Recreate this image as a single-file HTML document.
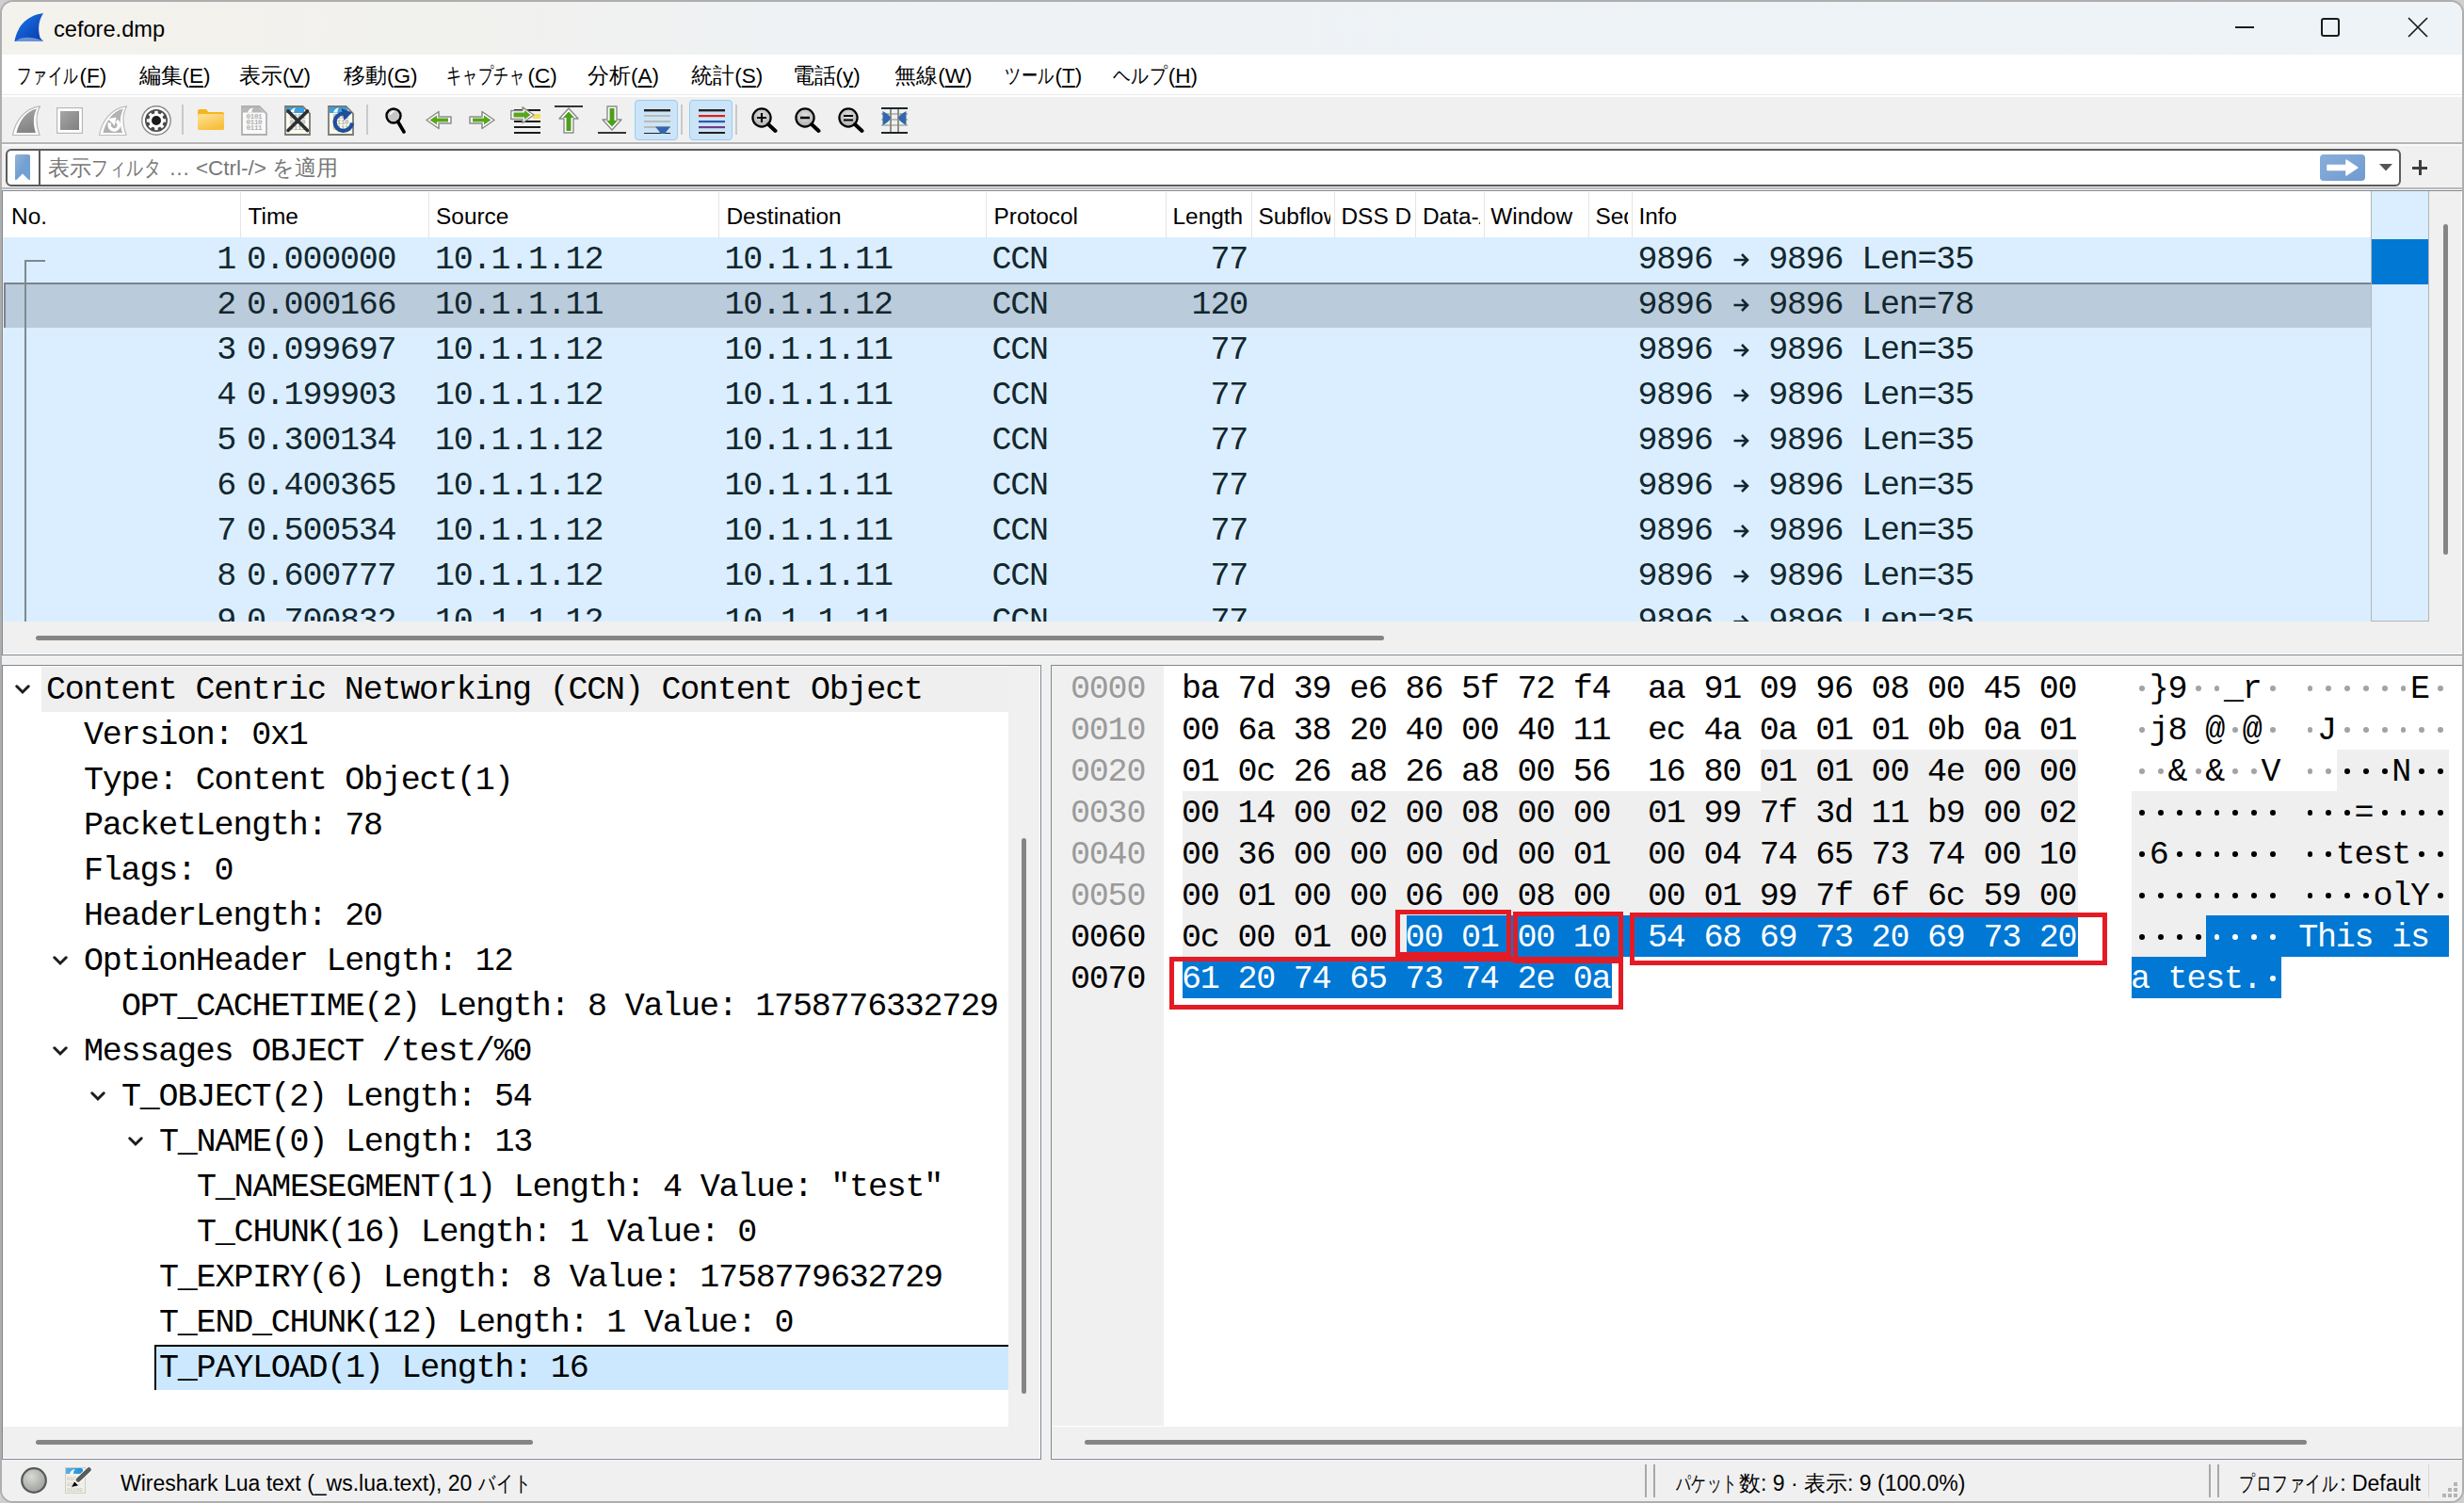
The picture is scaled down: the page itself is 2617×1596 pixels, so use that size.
<!DOCTYPE html><html><head><meta charset="utf-8"><title>cefore.dmp</title><style>
*{box-sizing:border-box;margin:0;padding:0}
html,body{width:2617px;height:1596px;overflow:hidden;background:#cfcfcf;font-family:"Liberation Sans", sans-serif}
.ab{position:absolute}
.win{position:absolute;left:0;top:0;width:2617px;height:1596px;border:2px solid #aeaeae;border-radius:14px;overflow:hidden;background:#f0f0f0}
.ui{font-family:"Liberation Sans", sans-serif;font-size:23.7px;color:#000;white-space:nowrap;line-height:30px;font-feature-settings:"palt" 1}
.mono{font-family:"Liberation Mono", monospace;font-size:35px;letter-spacing:-1.2px;white-space:pre;line-height:48px}
.u{text-decoration:underline;text-underline-offset:3px;text-decoration-thickness:1.5px}
</style></head><body>
<div class="win">
<div class="ab" style="left:-2px;top:-2px;width:2617px;height:1596px">
<div class="ab" style="left:0;top:0;width:2617px;height:58px;background:linear-gradient(90deg,#f4f2ec 0px,#f1f1ee 500px,#eef2f5 900px,#eef3f7 2617px)"></div>
<svg class="ab" style="left:14px;top:13px" width="34" height="33" viewBox="0 0 34 33">
<defs><linearGradient id="sg" x1="0" y1="0" x2="1" y2="1"><stop offset="0" stop-color="#1a7cf0"/><stop offset="1" stop-color="#0a36a8"/></linearGradient></defs>
<path d="M1.5 31 C4 18 11 4 32 1 C27 9 26 17 28.5 27 L32 31 Z" fill="url(#sg)"/>
<path d="M2 31 C8 26 18 25 31 30 L32 31 Z" fill="#7fa6e0" opacity="0.8"/>
</svg>
<div class="ab ui" style="left:57px;top:16px;font-size:23.6px">cefore.dmp</div>
<div class="ab" style="left:2374px;top:28px;width:20px;height:2px;background:#1a1a1a"></div>
<div class="ab" style="left:2465px;top:19px;width:20px;height:20px;border:2px solid #1a1a1a;border-radius:3px"></div>
<svg class="ab" style="left:2557px;top:18px" width="22" height="22" viewBox="0 0 22 22"><path d="M1 1 L21 21 M21 1 L1 21" stroke="#1a1a1a" stroke-width="1.7"/></svg>
<div class="ab" style="left:0;top:58px;width:2617px;height:43px;background:#fff"></div>
<div class="ab" style="left:0;top:100px;width:2617px;height:1px;background:#ebebeb"></div>
<div class="ab" style="left:0;top:101px;width:2617px;height:2px;background:#fff"></div>
<div class="ab ui" style="left:17.5px;top:66px;font-size:22.5px"><span style="display:inline-block;transform:scaleX(0.6778);transform-origin:0 0;margin-right:-29.00px">ファイル</span>(<span class="u">F</span>)</div>
<div class="ab ui" style="left:147.5px;top:66px;font-size:22.5px">編集(<span class="u">E</span>)</div>
<div class="ab ui" style="left:253.9px;top:66px;font-size:22.5px">表示(<span class="u">V</span>)</div>
<div class="ab ui" style="left:365px;top:66px;font-size:22.5px">移動(<span class="u">G</span>)</div>
<div class="ab ui" style="left:474.2px;top:66px;font-size:22.5px"><span style="display:inline-block;transform:scaleX(0.7013);transform-origin:0 0;margin-right:-33.60px">キャプチャ</span>(<span class="u">C</span>)</div>
<div class="ab ui" style="left:624px;top:66px;font-size:22.5px">分析(<span class="u">A</span>)</div>
<div class="ab ui" style="left:734.3px;top:66px;font-size:22.5px">統計(<span class="u">S</span>)</div>
<div class="ab ui" style="left:841.6px;top:66px;font-size:22.5px">電話(<span class="u">y</span>)</div>
<div class="ab ui" style="left:950.2px;top:66px;font-size:22.5px">無線(<span class="u">W</span>)</div>
<div class="ab ui" style="left:1066.8px;top:66px;font-size:22.5px"><span style="display:inline-block;transform:scaleX(0.7453);transform-origin:0 0;margin-right:-17.19px">ツール</span>(<span class="u">T</span>)</div>
<div class="ab ui" style="left:1181.6px;top:66px;font-size:22.5px"><span style="display:inline-block;transform:scaleX(0.8107);transform-origin:0 0;margin-right:-12.78px">ヘルプ</span>(<span class="u">H</span>)</div>
<div class="ab" style="left:0;top:103px;width:2617px;height:48px;background:#f0f0f0"></div>
<div class="ab" style="left:0;top:151px;width:2617px;height:2px;background:#b5b5b5"></div>
<div class="ab" style="left:0;top:153px;width:2617px;height:2px;background:#f9f9f9"></div>
<svg class="ab" style="left:13px;top:112px" width="30" height="32" viewBox="0 0 30 32"><defs><linearGradient id="g1" x1="0" y1="0" x2="0.3" y2="1"><stop offset="0" stop-color="#a8a8a8"/><stop offset="1" stop-color="#858585"/></linearGradient></defs>
<path d="M0.5 31.5 C3 18 12 3 29.5 0.8 C25 9 25 20 29 31.5 Z" fill="#fff" stroke="#b8b8b8" stroke-width="1.2"/>
<path d="M4.5 29 C7 18 14 6 26 3.5 C22 11 22 20 25 29 Z" fill="url(#g1)"/></svg>
<svg class="ab" style="left:60px;top:114px" width="28" height="28" viewBox="0 0 28 28"><defs><linearGradient id="g2" x1="0" y1="0" x2="1" y2="1"><stop offset="0" stop-color="#a5a5a5"/><stop offset="1" stop-color="#808080"/></linearGradient></defs>
<rect x="0.6" y="0.6" width="26.8" height="26.8" fill="#fff" stroke="#b8b8b8" stroke-width="1.2"/><rect x="4" y="4" width="20" height="20" fill="url(#g2)"/></svg>
<svg class="ab" style="left:105px;top:112px" width="30" height="32" viewBox="0 0 30 32"><path d="M0.5 31.5 C3 18 12 3 29.5 0.8 C25 9 25 20 29 31.5 Z" fill="#fff" stroke="#bdbdbd" stroke-width="1.2"/>
<path d="M4.5 29 C7 18 14 6 26 3.5 C22 11 22 20 25 29 Z" fill="#b2b2b2"/>
<path d="M18.8 16.4 A5.1 5.1 0 1 1 11.6 18.6" fill="none" stroke="#fff" stroke-width="3.6"/><path d="M9.6 14.2 L18.4 12.4 L16.9 21.5 Z" fill="#fff"/></svg>
<svg class="ab" style="left:150px;top:112px" width="32" height="32" viewBox="0 0 32 32"><circle cx="16" cy="16" r="15.2" fill="#fff" stroke="#8a8a8a" stroke-width="1.4"/><circle cx="16" cy="16" r="12" fill="#4a4a4a"/>
<g fill="#fff"><circle cx="16" cy="16" r="7.8"/><rect x="14.3" y="5.8" width="3.4" height="4" transform="rotate(0 16 16)"/><rect x="14.3" y="5.8" width="3.4" height="4" transform="rotate(45 16 16)"/><rect x="14.3" y="5.8" width="3.4" height="4" transform="rotate(90 16 16)"/><rect x="14.3" y="5.8" width="3.4" height="4" transform="rotate(135 16 16)"/><rect x="14.3" y="5.8" width="3.4" height="4" transform="rotate(180 16 16)"/><rect x="14.3" y="5.8" width="3.4" height="4" transform="rotate(225 16 16)"/><rect x="14.3" y="5.8" width="3.4" height="4" transform="rotate(270 16 16)"/><rect x="14.3" y="5.8" width="3.4" height="4" transform="rotate(315 16 16)"/></g><circle cx="16" cy="16" r="5" fill="#1a1a1a"/></svg>
<div class="ab" style="left:193px;top:111px;width:2px;height:32px;background:#c9c9c9"></div>
<div class="ab" style="left:389px;top:111px;width:2px;height:32px;background:#c9c9c9"></div>
<div class="ab" style="left:723px;top:111px;width:2px;height:32px;background:#c9c9c9"></div>
<div class="ab" style="left:781px;top:111px;width:2px;height:32px;background:#c9c9c9"></div>
<svg class="ab" style="left:210px;top:116px" width="28" height="22" viewBox="0 0 28 22"><defs><linearGradient id="g6" x1="0" y1="0" x2="0.5" y2="1"><stop offset="0" stop-color="#fde49a"/><stop offset="1" stop-color="#f8bf3c"/></linearGradient></defs>
<path d="M0 2 Q0 0 2 0 H9 L11.5 3 H26 Q28 3 28 5 V20 Q28 22 26 22 H2 Q0 22 0 20 Z" fill="#f6b51e"/><path d="M0 7 Q0 5 2 5 H26 Q28 5 28 7 V20 Q28 22 26 22 H2 Q0 22 0 20 Z" fill="url(#g6)"/></svg>
<svg class="ab" style="left:256px;top:112px" width="28" height="32" viewBox="0 0 28 32"><path d="M1 1 H19.5 L27 8.5 V31 H1 Z" fill="#fafafa" stroke="#b0b0b0" stroke-width="1.8"/>
<g fill="#b0b0b0" font-family='"Liberation Mono", monospace' font-size="7.5" font-weight="bold" letter-spacing="-0.3"><text x="5.5" y="13.8">0101</text><text x="5.5" y="20">0110</text><text x="5.5" y="26.2">0111</text></g><path d="M2 2 H19 L26 9 V7.5 H2Z" fill="#b8b8b8"/><path d="M7 7.5 Q8.5 3 13 2.5 Q11 4.5 11.5 7.5 Z" fill="#fff"/></svg>
<svg class="ab" style="left:302px;top:112px" width="28" height="32" viewBox="0 0 28 32"><path d="M1 1 H19.5 L27 8.5 V31 H1 Z" fill="#fbfaee" stroke="#7a7a72" stroke-width="1.8"/><rect x="2" y="2" width="19" height="6" fill="#3aa0e0"/>
<g fill="#b0b0b0" font-family='"Liberation Mono", monospace' font-size="7.5" font-weight="bold" letter-spacing="-0.3"><text x="5.5" y="13.8">0101</text><text x="5.5" y="20">0110</text><text x="5.5" y="26.2">0111</text></g><path d="M6 7.5 Q7.5 3 12 2.5 Q10 4.5 10.5 7.5 Z" fill="#fff"/><path d="M4 6 L24.5 26.5 M24.5 6 L4 26.5" stroke="#2b2f33" stroke-width="3.6" stroke-linecap="round"/></svg>
<svg class="ab" style="left:348px;top:112px" width="28" height="32" viewBox="0 0 28 32"><path d="M1 1 H19.5 L27 8.5 V31 H1 Z" fill="#fbfaee" stroke="#7a7a72" stroke-width="1.8"/><rect x="2" y="2" width="19" height="6" fill="#3aa0e0"/>
<g fill="#b0b0b0" font-family='"Liberation Mono", monospace' font-size="7.5" font-weight="bold" letter-spacing="-0.3"><text x="5.5" y="13.8">0101</text><text x="5.5" y="20">0110</text><text x="5.5" y="26.2">0111</text></g><path d="M6 7.5 Q7.5 3 12 2.5 Q10 4.5 10.5 7.5 Z" fill="#fff"/><path d="M17 8.5 A9.2 9.2 0 1 0 26 18.5" fill="none" stroke="#1f4e9a" stroke-width="4.2"/><path d="M14.5 3 L26 7.5 L17.5 16 Z" fill="#1f4e9a"/></svg>
<svg class="ab" style="left:409px;top:114px" width="22" height="28" viewBox="0 0 22 28"><circle cx="9" cy="9" r="7.5" fill="#c8c8c8" stroke="#000" stroke-width="2.4"/><path d="M5.5 8 A4 4 0 0 1 9.5 4.5" stroke="#fff" stroke-width="1.3" fill="none"/><path d="M13.5 15 L20 26" stroke="#000" stroke-width="3.6" stroke-linecap="round"/></svg>
<svg class="ab" style="left:452px;top:117px" width="28" height="21" viewBox="0 0 28 21"><g transform="translate(28 0) scale(-1 1)"><path d="M1 7 H14 V1.5 L27 10.5 L14 19.5 V14 H1 Z" fill="#fff" stroke="#8a8a8a" stroke-width="1.5" stroke-linejoin="round"/><path d="M4 8.5 H16 V5.5 L23.5 10.5 L16 15.5 V12.5 H4 Z" fill="#5aa520"/></g></svg>
<svg class="ab" style="left:498px;top:117px" width="28" height="21" viewBox="0 0 28 21"><g ><path d="M1 7 H14 V1.5 L27 10.5 L14 19.5 V14 H1 Z" fill="#fff" stroke="#8a8a8a" stroke-width="1.5" stroke-linejoin="round"/><path d="M4 8.5 H16 V5.5 L23.5 10.5 L16 15.5 V12.5 H4 Z" fill="#5aa520"/></g></svg>
<svg class="ab" style="left:542px;top:113px" width="32" height="30" viewBox="0 0 32 30"><g fill="#1b1b1b"><rect x="4" y="3" width="28" height="2"/><rect x="4" y="15" width="28" height="2"/><rect x="4" y="21" width="28" height="2"/><rect x="4" y="27" width="28" height="2"/></g><rect x="24" y="8" width="8" height="5" fill="#f6e05a"/>
<path d="M0.8 4.5 H13 V0.8 L25 9 L13 17.5 V13.5 H0.8 Z" fill="#fff" stroke="#8a8a8a" stroke-width="1.4" stroke-linejoin="round"/><path d="M3.5 6.5 H15 V4 L21.5 9 L15 14 V11.5 H3.5 Z" fill="#5aa520"/></svg>
<svg class="ab" style="left:589px;top:112px" width="30" height="30" viewBox="0 0 30 30"><rect x="0" y="0" width="30" height="2" fill="#333"/><path d="M15 3 L25 14 H20 V29 H10 V14 H5 Z" fill="#fff" stroke="#8a8a8a" stroke-width="1.4" stroke-linejoin="round"/><path d="M15 6.5 L21 13 H17.5 V27 H12.5 V13 H9 Z" fill="#4f9e1c"/></svg>
<svg class="ab" style="left:635px;top:112px" width="30" height="30" viewBox="0 0 30 30"><rect x="0" y="28" width="30" height="2" fill="#333"/><path d="M15 26 L25 15 H20 V1 H10 V15 H5 Z" fill="#fff" stroke="#8a8a8a" stroke-width="1.4" stroke-linejoin="round"/><path d="M15 22.5 L21 16 H17.5 V3 H12.5 V16 H9 Z" fill="#4f9e1c"/></svg>
<div class="ab" style="left:674px;top:106px;width:46px;height:43px;background:#cce4f7;border:1px solid #99ccf2;border-radius:4px"></div>
<svg class="ab" style="left:684px;top:115px" width="28" height="27" viewBox="0 0 28 27"><rect x="0" y="1" width="28" height="2.4" fill="#222"/><rect x="0" y="7" width="28" height="2" fill="#b9bcb4"/><rect x="0" y="13" width="28" height="2" fill="#b9bcb4"/><rect x="0" y="19" width="28" height="2" fill="#b9bcb4"/><rect x="0" y="26" width="28" height="2.4" fill="#222"/><path d="M12 19.5 H28 L21.5 27.5 Q20 28.5 18.5 27.5 Z" fill="#3465ac"/></svg>
<div class="ab" style="left:732px;top:106px;width:46px;height:43px;background:#cce4f7;border:1px solid #99ccf2;border-radius:4px"></div>
<svg class="ab" style="left:742px;top:115px" width="28" height="27" viewBox="0 0 28 27"><rect x="0" y="1" width="28" height="2.4" fill="#222"/><rect x="0" y="7" width="28" height="2.2" fill="#e02020"/><rect x="0" y="13" width="28" height="2.2" fill="#2a5aa8"/><rect x="0" y="19" width="28" height="2.2" fill="#6a3d8a"/><rect x="0" y="25" width="28" height="2.4" fill="#222"/></svg>
<svg class="ab" style="left:798px;top:114px" width="28" height="28" viewBox="0 0 28 28"><defs><radialGradient id="zg798" cx="0.5" cy="0.4" r="0.6"><stop offset="0" stop-color="#e6e6e6"/><stop offset="1" stop-color="#aaa"/></radialGradient></defs><circle cx="11" cy="11" r="9.6" fill="url(#zg798)" stroke="#000" stroke-width="2.2"/><path d="M18 18 L25.5 25" stroke="#000" stroke-width="4" stroke-linecap="round"/><path d="M6 11 H16 M11 6 V16" stroke="#000" stroke-width="2.2"/></svg>
<svg class="ab" style="left:844px;top:114px" width="28" height="28" viewBox="0 0 28 28"><defs><radialGradient id="zg844" cx="0.5" cy="0.4" r="0.6"><stop offset="0" stop-color="#e6e6e6"/><stop offset="1" stop-color="#aaa"/></radialGradient></defs><circle cx="11" cy="11" r="9.6" fill="url(#zg844)" stroke="#000" stroke-width="2.2"/><path d="M18 18 L25.5 25" stroke="#000" stroke-width="4" stroke-linecap="round"/><path d="M6 11 H16" stroke="#000" stroke-width="2.6"/></svg>
<svg class="ab" style="left:890px;top:114px" width="28" height="28" viewBox="0 0 28 28"><defs><radialGradient id="zg890" cx="0.5" cy="0.4" r="0.6"><stop offset="0" stop-color="#e6e6e6"/><stop offset="1" stop-color="#aaa"/></radialGradient></defs><circle cx="11" cy="11" r="9.6" fill="url(#zg890)" stroke="#000" stroke-width="2.2"/><path d="M18 18 L25.5 25" stroke="#000" stroke-width="4" stroke-linecap="round"/><path d="M6 9 H16 M6 13.5 H16" stroke="#000" stroke-width="2.2"/></svg>
<svg class="ab" style="left:936px;top:114px" width="28" height="28" viewBox="0 0 28 28"><g fill="#b9bcb4"><rect x="0" y="6" width="28" height="2"/><rect x="0" y="12" width="28" height="2"/><rect x="0" y="18" width="28" height="2"/></g><g fill="#8c8f8a"><rect x="9" y="0" width="2" height="28"/><rect x="17" y="0" width="2" height="28"/></g><g fill="#1e252b"><rect x="0" y="0" width="28" height="2"/><rect x="0" y="26" width="28" height="2"/></g><path d="M1.5 4 Q9 8 10 11 Q9 15 1.5 19 Z" fill="#3366aa"/><path d="M26.5 4 Q19 8 18 11 Q19 15 26.5 19 Z" fill="#3366aa"/></svg>
<div class="ab" style="left:6px;top:158px;width:2544px;height:40px;border:2px solid #5c5c5c;border-radius:6px;background:#fff"></div>
<div class="ab" style="left:41px;top:159px;width:2px;height:38px;background:#5c5c5c"></div>
<svg class="ab" style="left:16px;top:164px" width="16" height="28" viewBox="0 0 16 28"><defs><linearGradient id="bm" x1="0" y1="0" x2="1" y2="1"><stop offset="0" stop-color="#94b4d9"/><stop offset="0.5" stop-color="#73a0d2"/></linearGradient></defs><path d="M2 0 H14 Q16 0 16 2 V26 Q16 28 14 26.5 L8 20.5 L2 26.5 Q0 28 0 26 V2 Q0 0 2 0Z" fill="url(#bm)"/></svg>
<div class="ab ui" style="left:51px;top:164px;font-size:22.5px;color:#777">表示<span style="display:inline-block;transform:scaleX(0.7769);transform-origin:0 0;margin-right:-20.08px">フィルタ</span> … &lt;Ctrl-/&gt; を適用</div>
<svg class="ab" style="left:2464px;top:164px" width="48" height="28" viewBox="0 0 48 28"><defs><linearGradient id="ap" x1="0" y1="0" x2="1" y2="1"><stop offset="0" stop-color="#8aaedb"/><stop offset="1" stop-color="#6f9bd0"/></linearGradient></defs><rect x="0" y="0" width="48" height="28" rx="4" fill="url(#ap)"/><path d="M8 11.5 H28 V6 L40 14 L28 22 V16.5 H8 Z" fill="#fff" stroke="#fff" stroke-width="1.5" stroke-linejoin="round"/></svg>
<svg class="ab" style="left:2527px;top:174px" width="15" height="8" viewBox="0 0 15 8"><path d="M0 0 H14 L7 7.5Z" fill="#555"/></svg>
<div class="ab" style="left:2562px;top:176.5px;width:16px;height:3px;background:#3d3d3d"></div>
<div class="ab" style="left:2568.5px;top:170px;width:3px;height:16px;background:#3d3d3d"></div>
<div class="ab" style="left:0;top:199px;width:2617px;height:2px;background:#b9b9b9"></div>
<div class="ab" style="left:0;top:201px;width:2617px;height:1px;background:#f7f7f7"></div>
<div class="ab" style="left:2px;top:202px;width:2614px;height:494px;border:1px solid #7f8893;background:#f0f0f0"></div>
<div class="ab" style="left:3px;top:203px;width:2516px;height:49px;background:#fff"></div>
<div class="ab" style="left:3px;top:694px;width:2612px;height:1px;background:#fff"></div>
<div class="ab" style="left:2614px;top:203px;width:1px;height:492px;background:#fff"></div>
<div class="ab" style="left:255px;top:204px;width:1px;height:48px;background:#e5e5e5"></div>
<div class="ab" style="left:455px;top:204px;width:1px;height:48px;background:#e5e5e5"></div>
<div class="ab" style="left:763px;top:204px;width:1px;height:48px;background:#e5e5e5"></div>
<div class="ab" style="left:1047px;top:204px;width:1px;height:48px;background:#e5e5e5"></div>
<div class="ab" style="left:1238px;top:204px;width:1px;height:48px;background:#e5e5e5"></div>
<div class="ab" style="left:1329px;top:204px;width:1px;height:48px;background:#e5e5e5"></div>
<div class="ab" style="left:1417px;top:204px;width:1px;height:48px;background:#e5e5e5"></div>
<div class="ab" style="left:1503px;top:204px;width:1px;height:48px;background:#e5e5e5"></div>
<div class="ab" style="left:1576px;top:204px;width:1px;height:48px;background:#e5e5e5"></div>
<div class="ab" style="left:1687px;top:204px;width:1px;height:48px;background:#e5e5e5"></div>
<div class="ab" style="left:1733px;top:204px;width:1px;height:48px;background:#e5e5e5"></div>
<div class="ab ui" style="left:12.1px;top:215px;width:238.9px;overflow:hidden;font-size:24.4px">No.</div>
<div class="ab ui" style="left:263.5px;top:215px;width:187.5px;overflow:hidden;font-size:24.4px">Time</div>
<div class="ab ui" style="left:463.1px;top:215px;width:295.9px;overflow:hidden;font-size:24.4px">Source</div>
<div class="ab ui" style="left:771.5px;top:215px;width:271.5px;overflow:hidden;font-size:24.4px">Destination</div>
<div class="ab ui" style="left:1055.5px;top:215px;width:178.5px;overflow:hidden;font-size:24.4px">Protocol</div>
<div class="ab ui" style="left:1245.5px;top:215px;width:79.5px;overflow:hidden;font-size:24.4px">Length</div>
<div class="ab ui" style="left:1336.5px;top:215px;width:76.5px;overflow:hidden;font-size:24.4px">Subflow</div>
<div class="ab ui" style="left:1424.5px;top:215px;width:74.5px;overflow:hidden;font-size:24.4px">DSS Data</div>
<div class="ab ui" style="left:1511.0px;top:215px;width:61.0px;overflow:hidden;font-size:24.4px">Data-ACK</div>
<div class="ab ui" style="left:1583.3px;top:215px;width:99.70000000000005px;overflow:hidden;font-size:24.4px">Window</div>
<div class="ab ui" style="left:1694.5px;top:215px;width:34.5px;overflow:hidden;font-size:24.4px">Seq</div>
<div class="ab ui" style="left:1740.5px;top:215px;width:773.5px;overflow:hidden;font-size:24.4px">Info</div>
<div class="ab" style="left:3px;top:252px;width:2516px;height:408px;overflow:hidden">
<div class="ab" style="left:1px;top:0px;width:2515px;height:48px;background:#daeeff"></div>
<div class="ab mono" style="left:-53px;top:0px;width:300px;text-align:right;color:#12272e">1</div>
<div class="ab mono" style="left:259px;top:0px;color:#12272e">0.000000</div>
<div class="ab mono" style="left:459px;top:0px;color:#12272e">10.1.1.12</div>
<div class="ab mono" style="left:766.5px;top:0px;color:#12272e">10.1.1.11</div>
<div class="ab mono" style="left:1050.5px;top:0px;color:#12272e">CCN</div>
<div class="ab mono" style="left:1022px;top:0px;width:300px;text-align:right;color:#12272e">77</div>
<div class="ab mono" style="left:1736.5px;top:0px;color:#12272e">9896 <svg width="19.8" height="20" viewBox="0 0 19.8 20" style="vertical-align:-1px"><path d="M2.5 10 H17 M11 4 L17 10 L11 16" fill="none" stroke="#12272e" stroke-width="2.6" stroke-linecap="butt" stroke-linejoin="miter"/></svg> 9896 Len=35</div>
<div class="ab" style="left:1px;top:48px;width:2515px;height:48px;background:#bacbdb"></div>
<div class="ab" style="left:1px;top:48px;width:2515px;height:2px;background:#77858f"></div>
<div class="ab" style="left:1px;top:48px;width:2px;height:48px;background:#77858f"></div>
<div class="ab mono" style="left:-53px;top:48px;width:300px;text-align:right;color:#12272e">2</div>
<div class="ab mono" style="left:259px;top:48px;color:#12272e">0.000166</div>
<div class="ab mono" style="left:459px;top:48px;color:#12272e">10.1.1.11</div>
<div class="ab mono" style="left:766.5px;top:48px;color:#12272e">10.1.1.12</div>
<div class="ab mono" style="left:1050.5px;top:48px;color:#12272e">CCN</div>
<div class="ab mono" style="left:1022px;top:48px;width:300px;text-align:right;color:#12272e">120</div>
<div class="ab mono" style="left:1736.5px;top:48px;color:#12272e">9896 <svg width="19.8" height="20" viewBox="0 0 19.8 20" style="vertical-align:-1px"><path d="M2.5 10 H17 M11 4 L17 10 L11 16" fill="none" stroke="#12272e" stroke-width="2.6" stroke-linecap="butt" stroke-linejoin="miter"/></svg> 9896 Len=78</div>
<div class="ab" style="left:1px;top:96px;width:2515px;height:48px;background:#daeeff"></div>
<div class="ab mono" style="left:-53px;top:96px;width:300px;text-align:right;color:#12272e">3</div>
<div class="ab mono" style="left:259px;top:96px;color:#12272e">0.099697</div>
<div class="ab mono" style="left:459px;top:96px;color:#12272e">10.1.1.12</div>
<div class="ab mono" style="left:766.5px;top:96px;color:#12272e">10.1.1.11</div>
<div class="ab mono" style="left:1050.5px;top:96px;color:#12272e">CCN</div>
<div class="ab mono" style="left:1022px;top:96px;width:300px;text-align:right;color:#12272e">77</div>
<div class="ab mono" style="left:1736.5px;top:96px;color:#12272e">9896 <svg width="19.8" height="20" viewBox="0 0 19.8 20" style="vertical-align:-1px"><path d="M2.5 10 H17 M11 4 L17 10 L11 16" fill="none" stroke="#12272e" stroke-width="2.6" stroke-linecap="butt" stroke-linejoin="miter"/></svg> 9896 Len=35</div>
<div class="ab" style="left:1px;top:144px;width:2515px;height:48px;background:#daeeff"></div>
<div class="ab mono" style="left:-53px;top:144px;width:300px;text-align:right;color:#12272e">4</div>
<div class="ab mono" style="left:259px;top:144px;color:#12272e">0.199903</div>
<div class="ab mono" style="left:459px;top:144px;color:#12272e">10.1.1.12</div>
<div class="ab mono" style="left:766.5px;top:144px;color:#12272e">10.1.1.11</div>
<div class="ab mono" style="left:1050.5px;top:144px;color:#12272e">CCN</div>
<div class="ab mono" style="left:1022px;top:144px;width:300px;text-align:right;color:#12272e">77</div>
<div class="ab mono" style="left:1736.5px;top:144px;color:#12272e">9896 <svg width="19.8" height="20" viewBox="0 0 19.8 20" style="vertical-align:-1px"><path d="M2.5 10 H17 M11 4 L17 10 L11 16" fill="none" stroke="#12272e" stroke-width="2.6" stroke-linecap="butt" stroke-linejoin="miter"/></svg> 9896 Len=35</div>
<div class="ab" style="left:1px;top:192px;width:2515px;height:48px;background:#daeeff"></div>
<div class="ab mono" style="left:-53px;top:192px;width:300px;text-align:right;color:#12272e">5</div>
<div class="ab mono" style="left:259px;top:192px;color:#12272e">0.300134</div>
<div class="ab mono" style="left:459px;top:192px;color:#12272e">10.1.1.12</div>
<div class="ab mono" style="left:766.5px;top:192px;color:#12272e">10.1.1.11</div>
<div class="ab mono" style="left:1050.5px;top:192px;color:#12272e">CCN</div>
<div class="ab mono" style="left:1022px;top:192px;width:300px;text-align:right;color:#12272e">77</div>
<div class="ab mono" style="left:1736.5px;top:192px;color:#12272e">9896 <svg width="19.8" height="20" viewBox="0 0 19.8 20" style="vertical-align:-1px"><path d="M2.5 10 H17 M11 4 L17 10 L11 16" fill="none" stroke="#12272e" stroke-width="2.6" stroke-linecap="butt" stroke-linejoin="miter"/></svg> 9896 Len=35</div>
<div class="ab" style="left:1px;top:240px;width:2515px;height:48px;background:#daeeff"></div>
<div class="ab mono" style="left:-53px;top:240px;width:300px;text-align:right;color:#12272e">6</div>
<div class="ab mono" style="left:259px;top:240px;color:#12272e">0.400365</div>
<div class="ab mono" style="left:459px;top:240px;color:#12272e">10.1.1.12</div>
<div class="ab mono" style="left:766.5px;top:240px;color:#12272e">10.1.1.11</div>
<div class="ab mono" style="left:1050.5px;top:240px;color:#12272e">CCN</div>
<div class="ab mono" style="left:1022px;top:240px;width:300px;text-align:right;color:#12272e">77</div>
<div class="ab mono" style="left:1736.5px;top:240px;color:#12272e">9896 <svg width="19.8" height="20" viewBox="0 0 19.8 20" style="vertical-align:-1px"><path d="M2.5 10 H17 M11 4 L17 10 L11 16" fill="none" stroke="#12272e" stroke-width="2.6" stroke-linecap="butt" stroke-linejoin="miter"/></svg> 9896 Len=35</div>
<div class="ab" style="left:1px;top:288px;width:2515px;height:48px;background:#daeeff"></div>
<div class="ab mono" style="left:-53px;top:288px;width:300px;text-align:right;color:#12272e">7</div>
<div class="ab mono" style="left:259px;top:288px;color:#12272e">0.500534</div>
<div class="ab mono" style="left:459px;top:288px;color:#12272e">10.1.1.12</div>
<div class="ab mono" style="left:766.5px;top:288px;color:#12272e">10.1.1.11</div>
<div class="ab mono" style="left:1050.5px;top:288px;color:#12272e">CCN</div>
<div class="ab mono" style="left:1022px;top:288px;width:300px;text-align:right;color:#12272e">77</div>
<div class="ab mono" style="left:1736.5px;top:288px;color:#12272e">9896 <svg width="19.8" height="20" viewBox="0 0 19.8 20" style="vertical-align:-1px"><path d="M2.5 10 H17 M11 4 L17 10 L11 16" fill="none" stroke="#12272e" stroke-width="2.6" stroke-linecap="butt" stroke-linejoin="miter"/></svg> 9896 Len=35</div>
<div class="ab" style="left:1px;top:336px;width:2515px;height:48px;background:#daeeff"></div>
<div class="ab mono" style="left:-53px;top:336px;width:300px;text-align:right;color:#12272e">8</div>
<div class="ab mono" style="left:259px;top:336px;color:#12272e">0.600777</div>
<div class="ab mono" style="left:459px;top:336px;color:#12272e">10.1.1.12</div>
<div class="ab mono" style="left:766.5px;top:336px;color:#12272e">10.1.1.11</div>
<div class="ab mono" style="left:1050.5px;top:336px;color:#12272e">CCN</div>
<div class="ab mono" style="left:1022px;top:336px;width:300px;text-align:right;color:#12272e">77</div>
<div class="ab mono" style="left:1736.5px;top:336px;color:#12272e">9896 <svg width="19.8" height="20" viewBox="0 0 19.8 20" style="vertical-align:-1px"><path d="M2.5 10 H17 M11 4 L17 10 L11 16" fill="none" stroke="#12272e" stroke-width="2.6" stroke-linecap="butt" stroke-linejoin="miter"/></svg> 9896 Len=35</div>
<div class="ab" style="left:1px;top:384px;width:2515px;height:48px;background:#daeeff"></div>
<div class="ab mono" style="left:-53px;top:384px;width:300px;text-align:right;color:#12272e">9</div>
<div class="ab mono" style="left:259px;top:384px;color:#12272e">0.700832</div>
<div class="ab mono" style="left:459px;top:384px;color:#12272e">10.1.1.12</div>
<div class="ab mono" style="left:766.5px;top:384px;color:#12272e">10.1.1.11</div>
<div class="ab mono" style="left:1050.5px;top:384px;color:#12272e">CCN</div>
<div class="ab mono" style="left:1022px;top:384px;width:300px;text-align:right;color:#12272e">77</div>
<div class="ab mono" style="left:1736.5px;top:384px;color:#12272e">9896 <svg width="19.8" height="20" viewBox="0 0 19.8 20" style="vertical-align:-1px"><path d="M2.5 10 H17 M11 4 L17 10 L11 16" fill="none" stroke="#12272e" stroke-width="2.6" stroke-linecap="butt" stroke-linejoin="miter"/></svg> 9896 Len=35</div>
<div class="ab" style="left:23px;top:24px;width:2px;height:400px;background:#7f8a8f"></div>
<div class="ab" style="left:23px;top:24px;width:22px;height:2px;background:#7f8a8f"></div>
</div>
<div class="ab" style="left:2518px;top:203px;width:62px;height:457px;background:#daeeff;border:1px solid #b5b5b5;border-top:none"></div>
<div class="ab" style="left:2519px;top:254px;width:60px;height:48px;background:#0078d4"></div>
<div class="ab" style="left:2595px;top:238px;width:5px;height:351px;border-radius:3px;background:#858585"></div>
<div class="ab" style="left:38px;top:675px;width:1432px;height:5px;border-radius:3px;background:#858585"></div>
<div class="ab" style="left:2px;top:706px;width:1104px;height:844px;border:1px solid #7f8893;background:#f0f0f0"></div>
<div class="ab" style="left:3px;top:707px;width:1068px;height:808px;background:#fff"></div>
<div class="ab" style="left:3px;top:1548px;width:1102px;height:1px;background:#fff"></div>
<div class="ab" style="left:1104px;top:707px;width:1px;height:842px;background:#fff"></div>
<div class="ab" style="left:1085px;top:890px;width:5px;height:590px;border-radius:3px;background:#858585"></div>
<div class="ab" style="left:38px;top:1529px;width:528px;height:5px;border-radius:3px;background:#858585"></div>
<div class="ab" style="left:3px;top:707px;width:1068px;height:808px;overflow:hidden">
<div class="ab" style="left:41px;top:1px;width:1027px;height:48px;background:#efefef"></div>
<svg class="ab" style="left:13px;top:20px" width="16" height="11" viewBox="0 0 16 11"><path d="M1.8 1.8 L8 8 L14.2 1.8" fill="none" stroke="#1c1c1c" stroke-width="3" stroke-linecap="round" stroke-linejoin="miter"/></svg>
<div class="ab mono" style="left:46px;top:2px;color:#000">Content Centric Networking (CCN) Content Object</div>
<div class="ab mono" style="left:86px;top:50px;color:#000">Version: 0x1</div>
<div class="ab mono" style="left:86px;top:98px;color:#000">Type: Content Object(1)</div>
<div class="ab mono" style="left:86px;top:146px;color:#000">PacketLength: 78</div>
<div class="ab mono" style="left:86px;top:194px;color:#000">Flags: 0</div>
<div class="ab mono" style="left:86px;top:242px;color:#000">HeaderLength: 20</div>
<svg class="ab" style="left:53px;top:308px" width="16" height="11" viewBox="0 0 16 11"><path d="M1.8 1.8 L8 8 L14.2 1.8" fill="none" stroke="#1c1c1c" stroke-width="3" stroke-linecap="round" stroke-linejoin="miter"/></svg>
<div class="ab mono" style="left:86px;top:290px;color:#000">OptionHeader Length: 12</div>
<div class="ab mono" style="left:126px;top:338px;color:#000">OPT_CACHETIME(2) Length: 8 Value: 1758776332729</div>
<svg class="ab" style="left:53px;top:404px" width="16" height="11" viewBox="0 0 16 11"><path d="M1.8 1.8 L8 8 L14.2 1.8" fill="none" stroke="#1c1c1c" stroke-width="3" stroke-linecap="round" stroke-linejoin="miter"/></svg>
<div class="ab mono" style="left:86px;top:386px;color:#000">Messages OBJECT /test/%0</div>
<svg class="ab" style="left:93px;top:452px" width="16" height="11" viewBox="0 0 16 11"><path d="M1.8 1.8 L8 8 L14.2 1.8" fill="none" stroke="#1c1c1c" stroke-width="3" stroke-linecap="round" stroke-linejoin="miter"/></svg>
<div class="ab mono" style="left:126px;top:434px;color:#000">T_OBJECT(2) Length: 54</div>
<svg class="ab" style="left:133px;top:500px" width="16" height="11" viewBox="0 0 16 11"><path d="M1.8 1.8 L8 8 L14.2 1.8" fill="none" stroke="#1c1c1c" stroke-width="3" stroke-linecap="round" stroke-linejoin="miter"/></svg>
<div class="ab mono" style="left:166px;top:482px;color:#000">T_NAME(0) Length: 13</div>
<div class="ab mono" style="left:206px;top:530px;color:#000">T_NAMESEGMENT(1) Length: 4 Value: &quot;test&quot;</div>
<div class="ab mono" style="left:206px;top:578px;color:#000">T_CHUNK(16) Length: 1 Value: 0</div>
<div class="ab mono" style="left:166px;top:626px;color:#000">T_EXPIRY(6) Length: 8 Value: 1758779632729</div>
<div class="ab mono" style="left:166px;top:674px;color:#000">T_END_CHUNK(12) Length: 1 Value: 0</div>
<div class="ab" style="left:161px;top:721px;width:907px;height:48px;background:#cce8ff"></div>
<div class="ab" style="left:161px;top:721px;width:907px;height:2px;background:#000"></div>
<div class="ab" style="left:161px;top:721px;width:2px;height:48px;background:#000"></div>
<div class="ab mono" style="left:166px;top:722px;color:#000">T_PAYLOAD(1) Length: 16</div>
</div>
<div class="ab" style="left:1116px;top:706px;width:1500px;height:844px;border:1px solid #7f8893;background:#f0f0f0"></div>
<div class="ab" style="left:1236px;top:707px;width:1379px;height:808px;background:#fff"></div>
<div class="ab" style="left:1117px;top:1514px;width:1497px;height:1px;background:#fff"></div>
<div class="ab" style="left:1117px;top:1548px;width:1497px;height:1px;background:#fff"></div>
<div class="ab" style="left:1152px;top:1529px;width:1298px;height:5px;border-radius:3px;background:#858585"></div>
<div class="ab" style="left:1117px;top:707px;width:1498px;height:808px;overflow:hidden">
<div class="ab mono" style="left:20px;top:3px;line-height:44px;color:#9a9a9a">0000</div>
<div class="ab mono" style="left:138.00px;top:3px;line-height:44px;color:#000">ba</div>
<div class="ab" style="left:1155.40px;top:21.10px;width:5.8px;height:5.8px;border-radius:50%;background:#a3a3a3"></div>
<div class="ab mono" style="left:197.40px;top:3px;line-height:44px;color:#000">7d</div>
<div class="ab mono" style="left:1165.80px;top:3px;line-height:44px;color:#000">}</div>
<div class="ab mono" style="left:256.80px;top:3px;line-height:44px;color:#000">39</div>
<div class="ab mono" style="left:1185.60px;top:3px;line-height:44px;color:#000">9</div>
<div class="ab mono" style="left:316.20px;top:3px;line-height:44px;color:#000">e6</div>
<div class="ab" style="left:1214.80px;top:21.10px;width:5.8px;height:5.8px;border-radius:50%;background:#a3a3a3"></div>
<div class="ab mono" style="left:375.60px;top:3px;line-height:44px;color:#000">86</div>
<div class="ab" style="left:1234.60px;top:21.10px;width:5.8px;height:5.8px;border-radius:50%;background:#a3a3a3"></div>
<div class="ab mono" style="left:435.00px;top:3px;line-height:44px;color:#000">5f</div>
<div class="ab mono" style="left:1245.00px;top:3px;line-height:44px;color:#000">_</div>
<div class="ab mono" style="left:494.40px;top:3px;line-height:44px;color:#000">72</div>
<div class="ab mono" style="left:1264.80px;top:3px;line-height:44px;color:#000">r</div>
<div class="ab mono" style="left:553.80px;top:3px;line-height:44px;color:#000">f4</div>
<div class="ab" style="left:1294.00px;top:21.10px;width:5.8px;height:5.8px;border-radius:50%;background:#a3a3a3"></div>
<div class="ab mono" style="left:633.00px;top:3px;line-height:44px;color:#000">aa</div>
<div class="ab" style="left:1333.60px;top:21.10px;width:5.8px;height:5.8px;border-radius:50%;background:#a3a3a3"></div>
<div class="ab mono" style="left:692.40px;top:3px;line-height:44px;color:#000">91</div>
<div class="ab" style="left:1353.40px;top:21.10px;width:5.8px;height:5.8px;border-radius:50%;background:#a3a3a3"></div>
<div class="ab mono" style="left:751.80px;top:3px;line-height:44px;color:#000">09</div>
<div class="ab" style="left:1373.20px;top:21.10px;width:5.8px;height:5.8px;border-radius:50%;background:#a3a3a3"></div>
<div class="ab mono" style="left:811.20px;top:3px;line-height:44px;color:#000">96</div>
<div class="ab" style="left:1393.00px;top:21.10px;width:5.8px;height:5.8px;border-radius:50%;background:#a3a3a3"></div>
<div class="ab mono" style="left:870.60px;top:3px;line-height:44px;color:#000">08</div>
<div class="ab" style="left:1412.80px;top:21.10px;width:5.8px;height:5.8px;border-radius:50%;background:#a3a3a3"></div>
<div class="ab mono" style="left:930.00px;top:3px;line-height:44px;color:#000">00</div>
<div class="ab" style="left:1432.60px;top:21.10px;width:5.8px;height:5.8px;border-radius:50%;background:#a3a3a3"></div>
<div class="ab mono" style="left:989.40px;top:3px;line-height:44px;color:#000">45</div>
<div class="ab mono" style="left:1443.00px;top:3px;line-height:44px;color:#000">E</div>
<div class="ab mono" style="left:1048.80px;top:3px;line-height:44px;color:#000">00</div>
<div class="ab" style="left:1472.20px;top:21.10px;width:5.8px;height:5.8px;border-radius:50%;background:#a3a3a3"></div>
<div class="ab mono" style="left:20px;top:47px;line-height:44px;color:#9a9a9a">0010</div>
<div class="ab mono" style="left:138.00px;top:47px;line-height:44px;color:#000">00</div>
<div class="ab" style="left:1155.40px;top:65.10px;width:5.8px;height:5.8px;border-radius:50%;background:#a3a3a3"></div>
<div class="ab mono" style="left:197.40px;top:47px;line-height:44px;color:#000">6a</div>
<div class="ab mono" style="left:1165.80px;top:47px;line-height:44px;color:#000">j</div>
<div class="ab mono" style="left:256.80px;top:47px;line-height:44px;color:#000">38</div>
<div class="ab mono" style="left:1185.60px;top:47px;line-height:44px;color:#000">8</div>
<div class="ab mono" style="left:316.20px;top:47px;line-height:44px;color:#000">20</div>
<div class="ab mono" style="left:375.60px;top:47px;line-height:44px;color:#000">40</div>
<div class="ab mono" style="left:1225.20px;top:47px;line-height:44px;color:#000">@</div>
<div class="ab mono" style="left:435.00px;top:47px;line-height:44px;color:#000">00</div>
<div class="ab" style="left:1254.40px;top:65.10px;width:5.8px;height:5.8px;border-radius:50%;background:#a3a3a3"></div>
<div class="ab mono" style="left:494.40px;top:47px;line-height:44px;color:#000">40</div>
<div class="ab mono" style="left:1264.80px;top:47px;line-height:44px;color:#000">@</div>
<div class="ab mono" style="left:553.80px;top:47px;line-height:44px;color:#000">11</div>
<div class="ab" style="left:1294.00px;top:65.10px;width:5.8px;height:5.8px;border-radius:50%;background:#a3a3a3"></div>
<div class="ab mono" style="left:633.00px;top:47px;line-height:44px;color:#000">ec</div>
<div class="ab" style="left:1333.60px;top:65.10px;width:5.8px;height:5.8px;border-radius:50%;background:#a3a3a3"></div>
<div class="ab mono" style="left:692.40px;top:47px;line-height:44px;color:#000">4a</div>
<div class="ab mono" style="left:1344.00px;top:47px;line-height:44px;color:#000">J</div>
<div class="ab mono" style="left:751.80px;top:47px;line-height:44px;color:#000">0a</div>
<div class="ab" style="left:1373.20px;top:65.10px;width:5.8px;height:5.8px;border-radius:50%;background:#a3a3a3"></div>
<div class="ab mono" style="left:811.20px;top:47px;line-height:44px;color:#000">01</div>
<div class="ab" style="left:1393.00px;top:65.10px;width:5.8px;height:5.8px;border-radius:50%;background:#a3a3a3"></div>
<div class="ab mono" style="left:870.60px;top:47px;line-height:44px;color:#000">01</div>
<div class="ab" style="left:1412.80px;top:65.10px;width:5.8px;height:5.8px;border-radius:50%;background:#a3a3a3"></div>
<div class="ab mono" style="left:930.00px;top:47px;line-height:44px;color:#000">0b</div>
<div class="ab" style="left:1432.60px;top:65.10px;width:5.8px;height:5.8px;border-radius:50%;background:#a3a3a3"></div>
<div class="ab mono" style="left:989.40px;top:47px;line-height:44px;color:#000">0a</div>
<div class="ab" style="left:1452.40px;top:65.10px;width:5.8px;height:5.8px;border-radius:50%;background:#a3a3a3"></div>
<div class="ab mono" style="left:1048.80px;top:47px;line-height:44px;color:#000">01</div>
<div class="ab" style="left:1472.20px;top:65.10px;width:5.8px;height:5.8px;border-radius:50%;background:#a3a3a3"></div>
<div class="ab" style="left:752.80px;top:89px;width:60.00px;height:44px;background:#efefef"></div>
<div class="ab" style="left:1364.80px;top:89px;width:20.40px;height:44px;background:#efefef"></div>
<div class="ab" style="left:812.20px;top:89px;width:60.00px;height:44px;background:#efefef"></div>
<div class="ab" style="left:1384.60px;top:89px;width:20.40px;height:44px;background:#efefef"></div>
<div class="ab" style="left:871.60px;top:89px;width:60.00px;height:44px;background:#efefef"></div>
<div class="ab" style="left:1404.40px;top:89px;width:20.40px;height:44px;background:#efefef"></div>
<div class="ab" style="left:931.00px;top:89px;width:60.00px;height:44px;background:#efefef"></div>
<div class="ab" style="left:1424.20px;top:89px;width:20.40px;height:44px;background:#efefef"></div>
<div class="ab" style="left:990.40px;top:89px;width:60.00px;height:44px;background:#efefef"></div>
<div class="ab" style="left:1444.00px;top:89px;width:20.40px;height:44px;background:#efefef"></div>
<div class="ab" style="left:1049.80px;top:89px;width:40.20px;height:44px;background:#efefef"></div>
<div class="ab" style="left:1463.80px;top:89px;width:20.40px;height:44px;background:#efefef"></div>
<div class="ab mono" style="left:20px;top:91px;line-height:44px;color:#9a9a9a">0020</div>
<div class="ab mono" style="left:138.00px;top:91px;line-height:44px;color:#000">01</div>
<div class="ab" style="left:1155.40px;top:109.10px;width:5.8px;height:5.8px;border-radius:50%;background:#a3a3a3"></div>
<div class="ab mono" style="left:197.40px;top:91px;line-height:44px;color:#000">0c</div>
<div class="ab" style="left:1175.20px;top:109.10px;width:5.8px;height:5.8px;border-radius:50%;background:#a3a3a3"></div>
<div class="ab mono" style="left:256.80px;top:91px;line-height:44px;color:#000">26</div>
<div class="ab mono" style="left:1185.60px;top:91px;line-height:44px;color:#000">&amp;</div>
<div class="ab mono" style="left:316.20px;top:91px;line-height:44px;color:#000">a8</div>
<div class="ab" style="left:1214.80px;top:109.10px;width:5.8px;height:5.8px;border-radius:50%;background:#a3a3a3"></div>
<div class="ab mono" style="left:375.60px;top:91px;line-height:44px;color:#000">26</div>
<div class="ab mono" style="left:1225.20px;top:91px;line-height:44px;color:#000">&amp;</div>
<div class="ab mono" style="left:435.00px;top:91px;line-height:44px;color:#000">a8</div>
<div class="ab" style="left:1254.40px;top:109.10px;width:5.8px;height:5.8px;border-radius:50%;background:#a3a3a3"></div>
<div class="ab mono" style="left:494.40px;top:91px;line-height:44px;color:#000">00</div>
<div class="ab" style="left:1274.20px;top:109.10px;width:5.8px;height:5.8px;border-radius:50%;background:#a3a3a3"></div>
<div class="ab mono" style="left:553.80px;top:91px;line-height:44px;color:#000">56</div>
<div class="ab mono" style="left:1284.60px;top:91px;line-height:44px;color:#000">V</div>
<div class="ab mono" style="left:633.00px;top:91px;line-height:44px;color:#000">16</div>
<div class="ab" style="left:1333.60px;top:109.10px;width:5.8px;height:5.8px;border-radius:50%;background:#a3a3a3"></div>
<div class="ab mono" style="left:692.40px;top:91px;line-height:44px;color:#000">80</div>
<div class="ab" style="left:1353.40px;top:109.10px;width:5.8px;height:5.8px;border-radius:50%;background:#a3a3a3"></div>
<div class="ab mono" style="left:751.80px;top:91px;line-height:44px;color:#000">01</div>
<div class="ab" style="left:1373.20px;top:109.10px;width:5.8px;height:5.8px;border-radius:50%;background:#000"></div>
<div class="ab mono" style="left:811.20px;top:91px;line-height:44px;color:#000">01</div>
<div class="ab" style="left:1393.00px;top:109.10px;width:5.8px;height:5.8px;border-radius:50%;background:#000"></div>
<div class="ab mono" style="left:870.60px;top:91px;line-height:44px;color:#000">00</div>
<div class="ab" style="left:1412.80px;top:109.10px;width:5.8px;height:5.8px;border-radius:50%;background:#000"></div>
<div class="ab mono" style="left:930.00px;top:91px;line-height:44px;color:#000">4e</div>
<div class="ab mono" style="left:1423.20px;top:91px;line-height:44px;color:#000">N</div>
<div class="ab mono" style="left:989.40px;top:91px;line-height:44px;color:#000">00</div>
<div class="ab" style="left:1452.40px;top:109.10px;width:5.8px;height:5.8px;border-radius:50%;background:#000"></div>
<div class="ab mono" style="left:1048.80px;top:91px;line-height:44px;color:#000">00</div>
<div class="ab" style="left:1472.20px;top:109.10px;width:5.8px;height:5.8px;border-radius:50%;background:#000"></div>
<div class="ab" style="left:139.00px;top:133px;width:60.00px;height:44px;background:#efefef"></div>
<div class="ab" style="left:1147.00px;top:133px;width:20.40px;height:44px;background:#efefef"></div>
<div class="ab" style="left:198.40px;top:133px;width:60.00px;height:44px;background:#efefef"></div>
<div class="ab" style="left:1166.80px;top:133px;width:20.40px;height:44px;background:#efefef"></div>
<div class="ab" style="left:257.80px;top:133px;width:60.00px;height:44px;background:#efefef"></div>
<div class="ab" style="left:1186.60px;top:133px;width:20.40px;height:44px;background:#efefef"></div>
<div class="ab" style="left:317.20px;top:133px;width:60.00px;height:44px;background:#efefef"></div>
<div class="ab" style="left:1206.40px;top:133px;width:20.40px;height:44px;background:#efefef"></div>
<div class="ab" style="left:376.60px;top:133px;width:60.00px;height:44px;background:#efefef"></div>
<div class="ab" style="left:1226.20px;top:133px;width:20.40px;height:44px;background:#efefef"></div>
<div class="ab" style="left:436.00px;top:133px;width:60.00px;height:44px;background:#efefef"></div>
<div class="ab" style="left:1246.00px;top:133px;width:20.40px;height:44px;background:#efefef"></div>
<div class="ab" style="left:495.40px;top:133px;width:60.00px;height:44px;background:#efefef"></div>
<div class="ab" style="left:1265.80px;top:133px;width:20.40px;height:44px;background:#efefef"></div>
<div class="ab" style="left:554.80px;top:133px;width:79.80px;height:44px;background:#efefef"></div>
<div class="ab" style="left:1285.60px;top:133px;width:40.20px;height:44px;background:#efefef"></div>
<div class="ab" style="left:634.00px;top:133px;width:60.00px;height:44px;background:#efefef"></div>
<div class="ab" style="left:1325.20px;top:133px;width:20.40px;height:44px;background:#efefef"></div>
<div class="ab" style="left:693.40px;top:133px;width:60.00px;height:44px;background:#efefef"></div>
<div class="ab" style="left:1345.00px;top:133px;width:20.40px;height:44px;background:#efefef"></div>
<div class="ab" style="left:752.80px;top:133px;width:60.00px;height:44px;background:#efefef"></div>
<div class="ab" style="left:1364.80px;top:133px;width:20.40px;height:44px;background:#efefef"></div>
<div class="ab" style="left:812.20px;top:133px;width:60.00px;height:44px;background:#efefef"></div>
<div class="ab" style="left:1384.60px;top:133px;width:20.40px;height:44px;background:#efefef"></div>
<div class="ab" style="left:871.60px;top:133px;width:60.00px;height:44px;background:#efefef"></div>
<div class="ab" style="left:1404.40px;top:133px;width:20.40px;height:44px;background:#efefef"></div>
<div class="ab" style="left:931.00px;top:133px;width:60.00px;height:44px;background:#efefef"></div>
<div class="ab" style="left:1424.20px;top:133px;width:20.40px;height:44px;background:#efefef"></div>
<div class="ab" style="left:990.40px;top:133px;width:60.00px;height:44px;background:#efefef"></div>
<div class="ab" style="left:1444.00px;top:133px;width:20.40px;height:44px;background:#efefef"></div>
<div class="ab" style="left:1049.80px;top:133px;width:40.20px;height:44px;background:#efefef"></div>
<div class="ab" style="left:1463.80px;top:133px;width:20.40px;height:44px;background:#efefef"></div>
<div class="ab mono" style="left:20px;top:135px;line-height:44px;color:#9a9a9a">0030</div>
<div class="ab mono" style="left:138.00px;top:135px;line-height:44px;color:#000">00</div>
<div class="ab" style="left:1155.40px;top:153.10px;width:5.8px;height:5.8px;border-radius:50%;background:#000"></div>
<div class="ab mono" style="left:197.40px;top:135px;line-height:44px;color:#000">14</div>
<div class="ab" style="left:1175.20px;top:153.10px;width:5.8px;height:5.8px;border-radius:50%;background:#000"></div>
<div class="ab mono" style="left:256.80px;top:135px;line-height:44px;color:#000">00</div>
<div class="ab" style="left:1195.00px;top:153.10px;width:5.8px;height:5.8px;border-radius:50%;background:#000"></div>
<div class="ab mono" style="left:316.20px;top:135px;line-height:44px;color:#000">02</div>
<div class="ab" style="left:1214.80px;top:153.10px;width:5.8px;height:5.8px;border-radius:50%;background:#000"></div>
<div class="ab mono" style="left:375.60px;top:135px;line-height:44px;color:#000">00</div>
<div class="ab" style="left:1234.60px;top:153.10px;width:5.8px;height:5.8px;border-radius:50%;background:#000"></div>
<div class="ab mono" style="left:435.00px;top:135px;line-height:44px;color:#000">08</div>
<div class="ab" style="left:1254.40px;top:153.10px;width:5.8px;height:5.8px;border-radius:50%;background:#000"></div>
<div class="ab mono" style="left:494.40px;top:135px;line-height:44px;color:#000">00</div>
<div class="ab" style="left:1274.20px;top:153.10px;width:5.8px;height:5.8px;border-radius:50%;background:#000"></div>
<div class="ab mono" style="left:553.80px;top:135px;line-height:44px;color:#000">00</div>
<div class="ab" style="left:1294.00px;top:153.10px;width:5.8px;height:5.8px;border-radius:50%;background:#000"></div>
<div class="ab mono" style="left:633.00px;top:135px;line-height:44px;color:#000">01</div>
<div class="ab" style="left:1333.60px;top:153.10px;width:5.8px;height:5.8px;border-radius:50%;background:#000"></div>
<div class="ab mono" style="left:692.40px;top:135px;line-height:44px;color:#000">99</div>
<div class="ab" style="left:1353.40px;top:153.10px;width:5.8px;height:5.8px;border-radius:50%;background:#000"></div>
<div class="ab mono" style="left:751.80px;top:135px;line-height:44px;color:#000">7f</div>
<div class="ab" style="left:1373.20px;top:153.10px;width:5.8px;height:5.8px;border-radius:50%;background:#000"></div>
<div class="ab mono" style="left:811.20px;top:135px;line-height:44px;color:#000">3d</div>
<div class="ab mono" style="left:1383.60px;top:135px;line-height:44px;color:#000">=</div>
<div class="ab mono" style="left:870.60px;top:135px;line-height:44px;color:#000">11</div>
<div class="ab" style="left:1412.80px;top:153.10px;width:5.8px;height:5.8px;border-radius:50%;background:#000"></div>
<div class="ab mono" style="left:930.00px;top:135px;line-height:44px;color:#000">b9</div>
<div class="ab" style="left:1432.60px;top:153.10px;width:5.8px;height:5.8px;border-radius:50%;background:#000"></div>
<div class="ab mono" style="left:989.40px;top:135px;line-height:44px;color:#000">00</div>
<div class="ab" style="left:1452.40px;top:153.10px;width:5.8px;height:5.8px;border-radius:50%;background:#000"></div>
<div class="ab mono" style="left:1048.80px;top:135px;line-height:44px;color:#000">02</div>
<div class="ab" style="left:1472.20px;top:153.10px;width:5.8px;height:5.8px;border-radius:50%;background:#000"></div>
<div class="ab" style="left:139.00px;top:177px;width:60.00px;height:44px;background:#efefef"></div>
<div class="ab" style="left:1147.00px;top:177px;width:20.40px;height:44px;background:#efefef"></div>
<div class="ab" style="left:198.40px;top:177px;width:60.00px;height:44px;background:#efefef"></div>
<div class="ab" style="left:1166.80px;top:177px;width:20.40px;height:44px;background:#efefef"></div>
<div class="ab" style="left:257.80px;top:177px;width:60.00px;height:44px;background:#efefef"></div>
<div class="ab" style="left:1186.60px;top:177px;width:20.40px;height:44px;background:#efefef"></div>
<div class="ab" style="left:317.20px;top:177px;width:60.00px;height:44px;background:#efefef"></div>
<div class="ab" style="left:1206.40px;top:177px;width:20.40px;height:44px;background:#efefef"></div>
<div class="ab" style="left:376.60px;top:177px;width:60.00px;height:44px;background:#efefef"></div>
<div class="ab" style="left:1226.20px;top:177px;width:20.40px;height:44px;background:#efefef"></div>
<div class="ab" style="left:436.00px;top:177px;width:60.00px;height:44px;background:#efefef"></div>
<div class="ab" style="left:1246.00px;top:177px;width:20.40px;height:44px;background:#efefef"></div>
<div class="ab" style="left:495.40px;top:177px;width:60.00px;height:44px;background:#efefef"></div>
<div class="ab" style="left:1265.80px;top:177px;width:20.40px;height:44px;background:#efefef"></div>
<div class="ab" style="left:554.80px;top:177px;width:79.80px;height:44px;background:#efefef"></div>
<div class="ab" style="left:1285.60px;top:177px;width:40.20px;height:44px;background:#efefef"></div>
<div class="ab" style="left:634.00px;top:177px;width:60.00px;height:44px;background:#efefef"></div>
<div class="ab" style="left:1325.20px;top:177px;width:20.40px;height:44px;background:#efefef"></div>
<div class="ab" style="left:693.40px;top:177px;width:60.00px;height:44px;background:#efefef"></div>
<div class="ab" style="left:1345.00px;top:177px;width:20.40px;height:44px;background:#efefef"></div>
<div class="ab" style="left:752.80px;top:177px;width:60.00px;height:44px;background:#efefef"></div>
<div class="ab" style="left:1364.80px;top:177px;width:20.40px;height:44px;background:#efefef"></div>
<div class="ab" style="left:812.20px;top:177px;width:60.00px;height:44px;background:#efefef"></div>
<div class="ab" style="left:1384.60px;top:177px;width:20.40px;height:44px;background:#efefef"></div>
<div class="ab" style="left:871.60px;top:177px;width:60.00px;height:44px;background:#efefef"></div>
<div class="ab" style="left:1404.40px;top:177px;width:20.40px;height:44px;background:#efefef"></div>
<div class="ab" style="left:931.00px;top:177px;width:60.00px;height:44px;background:#efefef"></div>
<div class="ab" style="left:1424.20px;top:177px;width:20.40px;height:44px;background:#efefef"></div>
<div class="ab" style="left:990.40px;top:177px;width:60.00px;height:44px;background:#efefef"></div>
<div class="ab" style="left:1444.00px;top:177px;width:20.40px;height:44px;background:#efefef"></div>
<div class="ab" style="left:1049.80px;top:177px;width:40.20px;height:44px;background:#efefef"></div>
<div class="ab" style="left:1463.80px;top:177px;width:20.40px;height:44px;background:#efefef"></div>
<div class="ab mono" style="left:20px;top:179px;line-height:44px;color:#9a9a9a">0040</div>
<div class="ab mono" style="left:138.00px;top:179px;line-height:44px;color:#000">00</div>
<div class="ab" style="left:1155.40px;top:197.10px;width:5.8px;height:5.8px;border-radius:50%;background:#000"></div>
<div class="ab mono" style="left:197.40px;top:179px;line-height:44px;color:#000">36</div>
<div class="ab mono" style="left:1165.80px;top:179px;line-height:44px;color:#000">6</div>
<div class="ab mono" style="left:256.80px;top:179px;line-height:44px;color:#000">00</div>
<div class="ab" style="left:1195.00px;top:197.10px;width:5.8px;height:5.8px;border-radius:50%;background:#000"></div>
<div class="ab mono" style="left:316.20px;top:179px;line-height:44px;color:#000">00</div>
<div class="ab" style="left:1214.80px;top:197.10px;width:5.8px;height:5.8px;border-radius:50%;background:#000"></div>
<div class="ab mono" style="left:375.60px;top:179px;line-height:44px;color:#000">00</div>
<div class="ab" style="left:1234.60px;top:197.10px;width:5.8px;height:5.8px;border-radius:50%;background:#000"></div>
<div class="ab mono" style="left:435.00px;top:179px;line-height:44px;color:#000">0d</div>
<div class="ab" style="left:1254.40px;top:197.10px;width:5.8px;height:5.8px;border-radius:50%;background:#000"></div>
<div class="ab mono" style="left:494.40px;top:179px;line-height:44px;color:#000">00</div>
<div class="ab" style="left:1274.20px;top:197.10px;width:5.8px;height:5.8px;border-radius:50%;background:#000"></div>
<div class="ab mono" style="left:553.80px;top:179px;line-height:44px;color:#000">01</div>
<div class="ab" style="left:1294.00px;top:197.10px;width:5.8px;height:5.8px;border-radius:50%;background:#000"></div>
<div class="ab mono" style="left:633.00px;top:179px;line-height:44px;color:#000">00</div>
<div class="ab" style="left:1333.60px;top:197.10px;width:5.8px;height:5.8px;border-radius:50%;background:#000"></div>
<div class="ab mono" style="left:692.40px;top:179px;line-height:44px;color:#000">04</div>
<div class="ab" style="left:1353.40px;top:197.10px;width:5.8px;height:5.8px;border-radius:50%;background:#000"></div>
<div class="ab mono" style="left:751.80px;top:179px;line-height:44px;color:#000">74</div>
<div class="ab mono" style="left:1363.80px;top:179px;line-height:44px;color:#000">t</div>
<div class="ab mono" style="left:811.20px;top:179px;line-height:44px;color:#000">65</div>
<div class="ab mono" style="left:1383.60px;top:179px;line-height:44px;color:#000">e</div>
<div class="ab mono" style="left:870.60px;top:179px;line-height:44px;color:#000">73</div>
<div class="ab mono" style="left:1403.40px;top:179px;line-height:44px;color:#000">s</div>
<div class="ab mono" style="left:930.00px;top:179px;line-height:44px;color:#000">74</div>
<div class="ab mono" style="left:1423.20px;top:179px;line-height:44px;color:#000">t</div>
<div class="ab mono" style="left:989.40px;top:179px;line-height:44px;color:#000">00</div>
<div class="ab" style="left:1452.40px;top:197.10px;width:5.8px;height:5.8px;border-radius:50%;background:#000"></div>
<div class="ab mono" style="left:1048.80px;top:179px;line-height:44px;color:#000">10</div>
<div class="ab" style="left:1472.20px;top:197.10px;width:5.8px;height:5.8px;border-radius:50%;background:#000"></div>
<div class="ab" style="left:139.00px;top:221px;width:60.00px;height:44px;background:#efefef"></div>
<div class="ab" style="left:1147.00px;top:221px;width:20.40px;height:44px;background:#efefef"></div>
<div class="ab" style="left:198.40px;top:221px;width:60.00px;height:44px;background:#efefef"></div>
<div class="ab" style="left:1166.80px;top:221px;width:20.40px;height:44px;background:#efefef"></div>
<div class="ab" style="left:257.80px;top:221px;width:60.00px;height:44px;background:#efefef"></div>
<div class="ab" style="left:1186.60px;top:221px;width:20.40px;height:44px;background:#efefef"></div>
<div class="ab" style="left:317.20px;top:221px;width:60.00px;height:44px;background:#efefef"></div>
<div class="ab" style="left:1206.40px;top:221px;width:20.40px;height:44px;background:#efefef"></div>
<div class="ab" style="left:376.60px;top:221px;width:60.00px;height:44px;background:#efefef"></div>
<div class="ab" style="left:1226.20px;top:221px;width:20.40px;height:44px;background:#efefef"></div>
<div class="ab" style="left:436.00px;top:221px;width:60.00px;height:44px;background:#efefef"></div>
<div class="ab" style="left:1246.00px;top:221px;width:20.40px;height:44px;background:#efefef"></div>
<div class="ab" style="left:495.40px;top:221px;width:60.00px;height:44px;background:#efefef"></div>
<div class="ab" style="left:1265.80px;top:221px;width:20.40px;height:44px;background:#efefef"></div>
<div class="ab" style="left:554.80px;top:221px;width:79.80px;height:44px;background:#efefef"></div>
<div class="ab" style="left:1285.60px;top:221px;width:40.20px;height:44px;background:#efefef"></div>
<div class="ab" style="left:634.00px;top:221px;width:60.00px;height:44px;background:#efefef"></div>
<div class="ab" style="left:1325.20px;top:221px;width:20.40px;height:44px;background:#efefef"></div>
<div class="ab" style="left:693.40px;top:221px;width:60.00px;height:44px;background:#efefef"></div>
<div class="ab" style="left:1345.00px;top:221px;width:20.40px;height:44px;background:#efefef"></div>
<div class="ab" style="left:752.80px;top:221px;width:60.00px;height:44px;background:#efefef"></div>
<div class="ab" style="left:1364.80px;top:221px;width:20.40px;height:44px;background:#efefef"></div>
<div class="ab" style="left:812.20px;top:221px;width:60.00px;height:44px;background:#efefef"></div>
<div class="ab" style="left:1384.60px;top:221px;width:20.40px;height:44px;background:#efefef"></div>
<div class="ab" style="left:871.60px;top:221px;width:60.00px;height:44px;background:#efefef"></div>
<div class="ab" style="left:1404.40px;top:221px;width:20.40px;height:44px;background:#efefef"></div>
<div class="ab" style="left:931.00px;top:221px;width:60.00px;height:44px;background:#efefef"></div>
<div class="ab" style="left:1424.20px;top:221px;width:20.40px;height:44px;background:#efefef"></div>
<div class="ab" style="left:990.40px;top:221px;width:60.00px;height:44px;background:#efefef"></div>
<div class="ab" style="left:1444.00px;top:221px;width:20.40px;height:44px;background:#efefef"></div>
<div class="ab" style="left:1049.80px;top:221px;width:40.20px;height:44px;background:#efefef"></div>
<div class="ab" style="left:1463.80px;top:221px;width:20.40px;height:44px;background:#efefef"></div>
<div class="ab mono" style="left:20px;top:223px;line-height:44px;color:#9a9a9a">0050</div>
<div class="ab mono" style="left:138.00px;top:223px;line-height:44px;color:#000">00</div>
<div class="ab" style="left:1155.40px;top:241.10px;width:5.8px;height:5.8px;border-radius:50%;background:#000"></div>
<div class="ab mono" style="left:197.40px;top:223px;line-height:44px;color:#000">01</div>
<div class="ab" style="left:1175.20px;top:241.10px;width:5.8px;height:5.8px;border-radius:50%;background:#000"></div>
<div class="ab mono" style="left:256.80px;top:223px;line-height:44px;color:#000">00</div>
<div class="ab" style="left:1195.00px;top:241.10px;width:5.8px;height:5.8px;border-radius:50%;background:#000"></div>
<div class="ab mono" style="left:316.20px;top:223px;line-height:44px;color:#000">00</div>
<div class="ab" style="left:1214.80px;top:241.10px;width:5.8px;height:5.8px;border-radius:50%;background:#000"></div>
<div class="ab mono" style="left:375.60px;top:223px;line-height:44px;color:#000">06</div>
<div class="ab" style="left:1234.60px;top:241.10px;width:5.8px;height:5.8px;border-radius:50%;background:#000"></div>
<div class="ab mono" style="left:435.00px;top:223px;line-height:44px;color:#000">00</div>
<div class="ab" style="left:1254.40px;top:241.10px;width:5.8px;height:5.8px;border-radius:50%;background:#000"></div>
<div class="ab mono" style="left:494.40px;top:223px;line-height:44px;color:#000">08</div>
<div class="ab" style="left:1274.20px;top:241.10px;width:5.8px;height:5.8px;border-radius:50%;background:#000"></div>
<div class="ab mono" style="left:553.80px;top:223px;line-height:44px;color:#000">00</div>
<div class="ab" style="left:1294.00px;top:241.10px;width:5.8px;height:5.8px;border-radius:50%;background:#000"></div>
<div class="ab mono" style="left:633.00px;top:223px;line-height:44px;color:#000">00</div>
<div class="ab" style="left:1333.60px;top:241.10px;width:5.8px;height:5.8px;border-radius:50%;background:#000"></div>
<div class="ab mono" style="left:692.40px;top:223px;line-height:44px;color:#000">01</div>
<div class="ab" style="left:1353.40px;top:241.10px;width:5.8px;height:5.8px;border-radius:50%;background:#000"></div>
<div class="ab mono" style="left:751.80px;top:223px;line-height:44px;color:#000">99</div>
<div class="ab" style="left:1373.20px;top:241.10px;width:5.8px;height:5.8px;border-radius:50%;background:#000"></div>
<div class="ab mono" style="left:811.20px;top:223px;line-height:44px;color:#000">7f</div>
<div class="ab" style="left:1393.00px;top:241.10px;width:5.8px;height:5.8px;border-radius:50%;background:#000"></div>
<div class="ab mono" style="left:870.60px;top:223px;line-height:44px;color:#000">6f</div>
<div class="ab mono" style="left:1403.40px;top:223px;line-height:44px;color:#000">o</div>
<div class="ab mono" style="left:930.00px;top:223px;line-height:44px;color:#000">6c</div>
<div class="ab mono" style="left:1423.20px;top:223px;line-height:44px;color:#000">l</div>
<div class="ab mono" style="left:989.40px;top:223px;line-height:44px;color:#000">59</div>
<div class="ab mono" style="left:1443.00px;top:223px;line-height:44px;color:#000">Y</div>
<div class="ab mono" style="left:1048.80px;top:223px;line-height:44px;color:#000">00</div>
<div class="ab" style="left:1472.20px;top:241.10px;width:5.8px;height:5.8px;border-radius:50%;background:#000"></div>
<div class="ab" style="left:139.00px;top:265px;width:60.00px;height:44px;background:#efefef"></div>
<div class="ab" style="left:1147.00px;top:265px;width:20.40px;height:44px;background:#efefef"></div>
<div class="ab" style="left:198.40px;top:265px;width:60.00px;height:44px;background:#efefef"></div>
<div class="ab" style="left:1166.80px;top:265px;width:20.40px;height:44px;background:#efefef"></div>
<div class="ab" style="left:257.80px;top:265px;width:60.00px;height:44px;background:#efefef"></div>
<div class="ab" style="left:1186.60px;top:265px;width:20.40px;height:44px;background:#efefef"></div>
<div class="ab" style="left:317.20px;top:265px;width:60.00px;height:44px;background:#efefef"></div>
<div class="ab" style="left:1206.40px;top:265px;width:20.40px;height:44px;background:#efefef"></div>
<div class="ab" style="left:376.60px;top:265px;width:60.00px;height:44px;background:#0078d4"></div>
<div class="ab" style="left:1226.20px;top:265px;width:20.40px;height:44px;background:#0078d4"></div>
<div class="ab" style="left:436.00px;top:265px;width:60.00px;height:44px;background:#0078d4"></div>
<div class="ab" style="left:1246.00px;top:265px;width:20.40px;height:44px;background:#0078d4"></div>
<div class="ab" style="left:495.40px;top:265px;width:60.00px;height:44px;background:#0078d4"></div>
<div class="ab" style="left:1265.80px;top:265px;width:20.40px;height:44px;background:#0078d4"></div>
<div class="ab" style="left:554.80px;top:265px;width:79.80px;height:44px;background:#0078d4"></div>
<div class="ab" style="left:1285.60px;top:265px;width:40.20px;height:44px;background:#0078d4"></div>
<div class="ab" style="left:634.00px;top:265px;width:60.00px;height:44px;background:#0078d4"></div>
<div class="ab" style="left:1325.20px;top:265px;width:20.40px;height:44px;background:#0078d4"></div>
<div class="ab" style="left:693.40px;top:265px;width:60.00px;height:44px;background:#0078d4"></div>
<div class="ab" style="left:1345.00px;top:265px;width:20.40px;height:44px;background:#0078d4"></div>
<div class="ab" style="left:752.80px;top:265px;width:60.00px;height:44px;background:#0078d4"></div>
<div class="ab" style="left:1364.80px;top:265px;width:20.40px;height:44px;background:#0078d4"></div>
<div class="ab" style="left:812.20px;top:265px;width:60.00px;height:44px;background:#0078d4"></div>
<div class="ab" style="left:1384.60px;top:265px;width:20.40px;height:44px;background:#0078d4"></div>
<div class="ab" style="left:871.60px;top:265px;width:60.00px;height:44px;background:#0078d4"></div>
<div class="ab" style="left:1404.40px;top:265px;width:20.40px;height:44px;background:#0078d4"></div>
<div class="ab" style="left:931.00px;top:265px;width:60.00px;height:44px;background:#0078d4"></div>
<div class="ab" style="left:1424.20px;top:265px;width:20.40px;height:44px;background:#0078d4"></div>
<div class="ab" style="left:990.40px;top:265px;width:60.00px;height:44px;background:#0078d4"></div>
<div class="ab" style="left:1444.00px;top:265px;width:20.40px;height:44px;background:#0078d4"></div>
<div class="ab" style="left:1049.80px;top:265px;width:40.20px;height:44px;background:#0078d4"></div>
<div class="ab" style="left:1463.80px;top:265px;width:20.40px;height:44px;background:#0078d4"></div>
<div class="ab mono" style="left:20px;top:267px;line-height:44px;color:#000">0060</div>
<div class="ab mono" style="left:138.00px;top:267px;line-height:44px;color:#000">0c</div>
<div class="ab" style="left:1155.40px;top:285.10px;width:5.8px;height:5.8px;border-radius:50%;background:#000"></div>
<div class="ab mono" style="left:197.40px;top:267px;line-height:44px;color:#000">00</div>
<div class="ab" style="left:1175.20px;top:285.10px;width:5.8px;height:5.8px;border-radius:50%;background:#000"></div>
<div class="ab mono" style="left:256.80px;top:267px;line-height:44px;color:#000">01</div>
<div class="ab" style="left:1195.00px;top:285.10px;width:5.8px;height:5.8px;border-radius:50%;background:#000"></div>
<div class="ab mono" style="left:316.20px;top:267px;line-height:44px;color:#000">00</div>
<div class="ab" style="left:1214.80px;top:285.10px;width:5.8px;height:5.8px;border-radius:50%;background:#000"></div>
<div class="ab mono" style="left:375.60px;top:267px;line-height:44px;color:#fff">00</div>
<div class="ab" style="left:1234.60px;top:285.10px;width:5.8px;height:5.8px;border-radius:50%;background:#fff"></div>
<div class="ab mono" style="left:435.00px;top:267px;line-height:44px;color:#fff">01</div>
<div class="ab" style="left:1254.40px;top:285.10px;width:5.8px;height:5.8px;border-radius:50%;background:#fff"></div>
<div class="ab mono" style="left:494.40px;top:267px;line-height:44px;color:#fff">00</div>
<div class="ab" style="left:1274.20px;top:285.10px;width:5.8px;height:5.8px;border-radius:50%;background:#fff"></div>
<div class="ab mono" style="left:553.80px;top:267px;line-height:44px;color:#fff">10</div>
<div class="ab" style="left:1294.00px;top:285.10px;width:5.8px;height:5.8px;border-radius:50%;background:#fff"></div>
<div class="ab mono" style="left:633.00px;top:267px;line-height:44px;color:#fff">54</div>
<div class="ab mono" style="left:1324.20px;top:267px;line-height:44px;color:#fff">T</div>
<div class="ab mono" style="left:692.40px;top:267px;line-height:44px;color:#fff">68</div>
<div class="ab mono" style="left:1344.00px;top:267px;line-height:44px;color:#fff">h</div>
<div class="ab mono" style="left:751.80px;top:267px;line-height:44px;color:#fff">69</div>
<div class="ab mono" style="left:1363.80px;top:267px;line-height:44px;color:#fff">i</div>
<div class="ab mono" style="left:811.20px;top:267px;line-height:44px;color:#fff">73</div>
<div class="ab mono" style="left:1383.60px;top:267px;line-height:44px;color:#fff">s</div>
<div class="ab mono" style="left:870.60px;top:267px;line-height:44px;color:#fff">20</div>
<div class="ab mono" style="left:930.00px;top:267px;line-height:44px;color:#fff">69</div>
<div class="ab mono" style="left:1423.20px;top:267px;line-height:44px;color:#fff">i</div>
<div class="ab mono" style="left:989.40px;top:267px;line-height:44px;color:#fff">73</div>
<div class="ab mono" style="left:1443.00px;top:267px;line-height:44px;color:#fff">s</div>
<div class="ab mono" style="left:1048.80px;top:267px;line-height:44px;color:#fff">20</div>
<div class="ab" style="left:139.00px;top:309px;width:60.00px;height:44px;background:#0078d4"></div>
<div class="ab" style="left:1147.00px;top:309px;width:20.40px;height:44px;background:#0078d4"></div>
<div class="ab" style="left:198.40px;top:309px;width:60.00px;height:44px;background:#0078d4"></div>
<div class="ab" style="left:1166.80px;top:309px;width:20.40px;height:44px;background:#0078d4"></div>
<div class="ab" style="left:257.80px;top:309px;width:60.00px;height:44px;background:#0078d4"></div>
<div class="ab" style="left:1186.60px;top:309px;width:20.40px;height:44px;background:#0078d4"></div>
<div class="ab" style="left:317.20px;top:309px;width:60.00px;height:44px;background:#0078d4"></div>
<div class="ab" style="left:1206.40px;top:309px;width:20.40px;height:44px;background:#0078d4"></div>
<div class="ab" style="left:376.60px;top:309px;width:60.00px;height:44px;background:#0078d4"></div>
<div class="ab" style="left:1226.20px;top:309px;width:20.40px;height:44px;background:#0078d4"></div>
<div class="ab" style="left:436.00px;top:309px;width:60.00px;height:44px;background:#0078d4"></div>
<div class="ab" style="left:1246.00px;top:309px;width:20.40px;height:44px;background:#0078d4"></div>
<div class="ab" style="left:495.40px;top:309px;width:60.00px;height:44px;background:#0078d4"></div>
<div class="ab" style="left:1265.80px;top:309px;width:20.40px;height:44px;background:#0078d4"></div>
<div class="ab" style="left:554.80px;top:309px;width:40.20px;height:44px;background:#0078d4"></div>
<div class="ab" style="left:1285.60px;top:309px;width:20.40px;height:44px;background:#0078d4"></div>
<div class="ab mono" style="left:20px;top:311px;line-height:44px;color:#000">0070</div>
<div class="ab mono" style="left:138.00px;top:311px;line-height:44px;color:#fff">61</div>
<div class="ab mono" style="left:1146.00px;top:311px;line-height:44px;color:#fff">a</div>
<div class="ab mono" style="left:197.40px;top:311px;line-height:44px;color:#fff">20</div>
<div class="ab mono" style="left:256.80px;top:311px;line-height:44px;color:#fff">74</div>
<div class="ab mono" style="left:1185.60px;top:311px;line-height:44px;color:#fff">t</div>
<div class="ab mono" style="left:316.20px;top:311px;line-height:44px;color:#fff">65</div>
<div class="ab mono" style="left:1205.40px;top:311px;line-height:44px;color:#fff">e</div>
<div class="ab mono" style="left:375.60px;top:311px;line-height:44px;color:#fff">73</div>
<div class="ab mono" style="left:1225.20px;top:311px;line-height:44px;color:#fff">s</div>
<div class="ab mono" style="left:435.00px;top:311px;line-height:44px;color:#fff">74</div>
<div class="ab mono" style="left:1245.00px;top:311px;line-height:44px;color:#fff">t</div>
<div class="ab mono" style="left:494.40px;top:311px;line-height:44px;color:#fff">2e</div>
<div class="ab mono" style="left:1264.80px;top:311px;line-height:44px;color:#fff">.</div>
<div class="ab mono" style="left:553.80px;top:311px;line-height:44px;color:#fff">0a</div>
<div class="ab" style="left:1294.00px;top:329.10px;width:5.8px;height:5.8px;border-radius:50%;background:#fff"></div>
</div>
<div class="ab" style="left:1482px;top:966px;width:123px;height:50px;border:5px solid #e41b24"></div>
<div class="ab" style="left:1607px;top:968px;width:117px;height:55px;border:5px solid #e41b24"></div>
<div class="ab" style="left:1730.5px;top:969px;width:507.0px;height:55.5px;border:5px solid #e41b24"></div>
<div class="ab" style="left:1242px;top:1016px;width:482px;height:56px;border:5px solid #e41b24"></div>
<div class="ab" style="left:0;top:1550px;width:2617px;height:46px;background:#f0f0f0"></div>
<svg class="ab" style="left:22px;top:1558px" width="28" height="28" viewBox="0 0 28 28"><defs><radialGradient id="st1" cx="0.4" cy="0.35" r="0.7"><stop offset="0" stop-color="#d8dad6"/><stop offset="1" stop-color="#9a9d98"/></radialGradient></defs><circle cx="14" cy="14" r="12.8" fill="url(#st1)" stroke="#555a58" stroke-width="2.2"/></svg>
<svg class="ab" style="left:69px;top:1558px" width="28" height="28" viewBox="0 0 28 28"><defs><linearGradient id="edg" x1="0" y1="0" x2="1" y2="0"><stop offset="0" stop-color="#5ab0e6"/><stop offset="1" stop-color="#1e8fd8"/></linearGradient></defs><rect x="0.5" y="0.5" width="21" height="27" fill="#f1f0e8" stroke="#cfcfc6"/><path d="M1 1 H17 Q19 1 19 3 V7 H1Z" fill="url(#edg)"/><path d="M5 7 Q6.5 2.5 10.5 2 Q8.5 4 9 7 Z" fill="#fff"/><g fill="#c2c2bc" font-family='"Liberation Mono", monospace' font-size="5.5"><text x="2" y="14">0101</text><text x="2" y="20">0110</text><text x="2" y="26">01100</text></g>
<path d="M13.5 14 L25.5 2.5" stroke="#fff" stroke-width="6.5" stroke-linecap="round"/><path d="M14 13.5 L25.5 2.5" stroke="#5a5c59" stroke-width="4.6" stroke-linecap="round"/><path d="M10 15 L14.5 19.5 L6.5 21.5 Z" fill="#000" stroke="#fff" stroke-width="0.6"/></svg>
<div class="ab ui" style="left:128px;top:1560px;font-size:23px">Wireshark Lua text (_ws.lua.text), 20 <span style="display:inline-block;transform:scaleX(0.7826);transform-origin:0 0;margin-right:-15.00px">バイト</span></div>
<div class="ab" style="left:1747px;top:1555px;width:2px;height:35px;background:#a8a8a8"></div>
<div class="ab" style="left:1756px;top:1555px;width:2px;height:35px;background:#a8a8a8"></div>
<div class="ab" style="left:2346px;top:1555px;width:2px;height:35px;background:#a8a8a8"></div>
<div class="ab" style="left:2355px;top:1555px;width:2px;height:35px;background:#a8a8a8"></div>
<div class="ab" style="left:2579px;top:1555px;width:1px;height:35px;background:#d6d6d6"></div>
<div class="ab ui" style="left:1780px;top:1560px;font-size:23px"><span style="display:inline-block;transform:scaleX(0.6848);transform-origin:0 0;margin-right:-29.00px">パケット</span>数: 9 · 表示: 9 (100.0%)</div>
<div class="ab ui" style="left:2378px;top:1560px;font-size:23px"><span style="display:inline-block;transform:scaleX(0.7330);transform-origin:0 0;margin-right:-36.84px">プロファイル</span>: Default</div>
<div class="ab" style="left:2606px;top:1574px;width:4px;height:4px;background:#b4b4b4"></div>
<div class="ab" style="left:2600px;top:1580px;width:4px;height:4px;background:#b4b4b4"></div>
<div class="ab" style="left:2606px;top:1580px;width:4px;height:4px;background:#b4b4b4"></div>
<div class="ab" style="left:2594px;top:1586px;width:4px;height:4px;background:#b4b4b4"></div>
<div class="ab" style="left:2600px;top:1586px;width:4px;height:4px;background:#b4b4b4"></div>
<div class="ab" style="left:2606px;top:1586px;width:4px;height:4px;background:#b4b4b4"></div>
</div></div></body></html>
